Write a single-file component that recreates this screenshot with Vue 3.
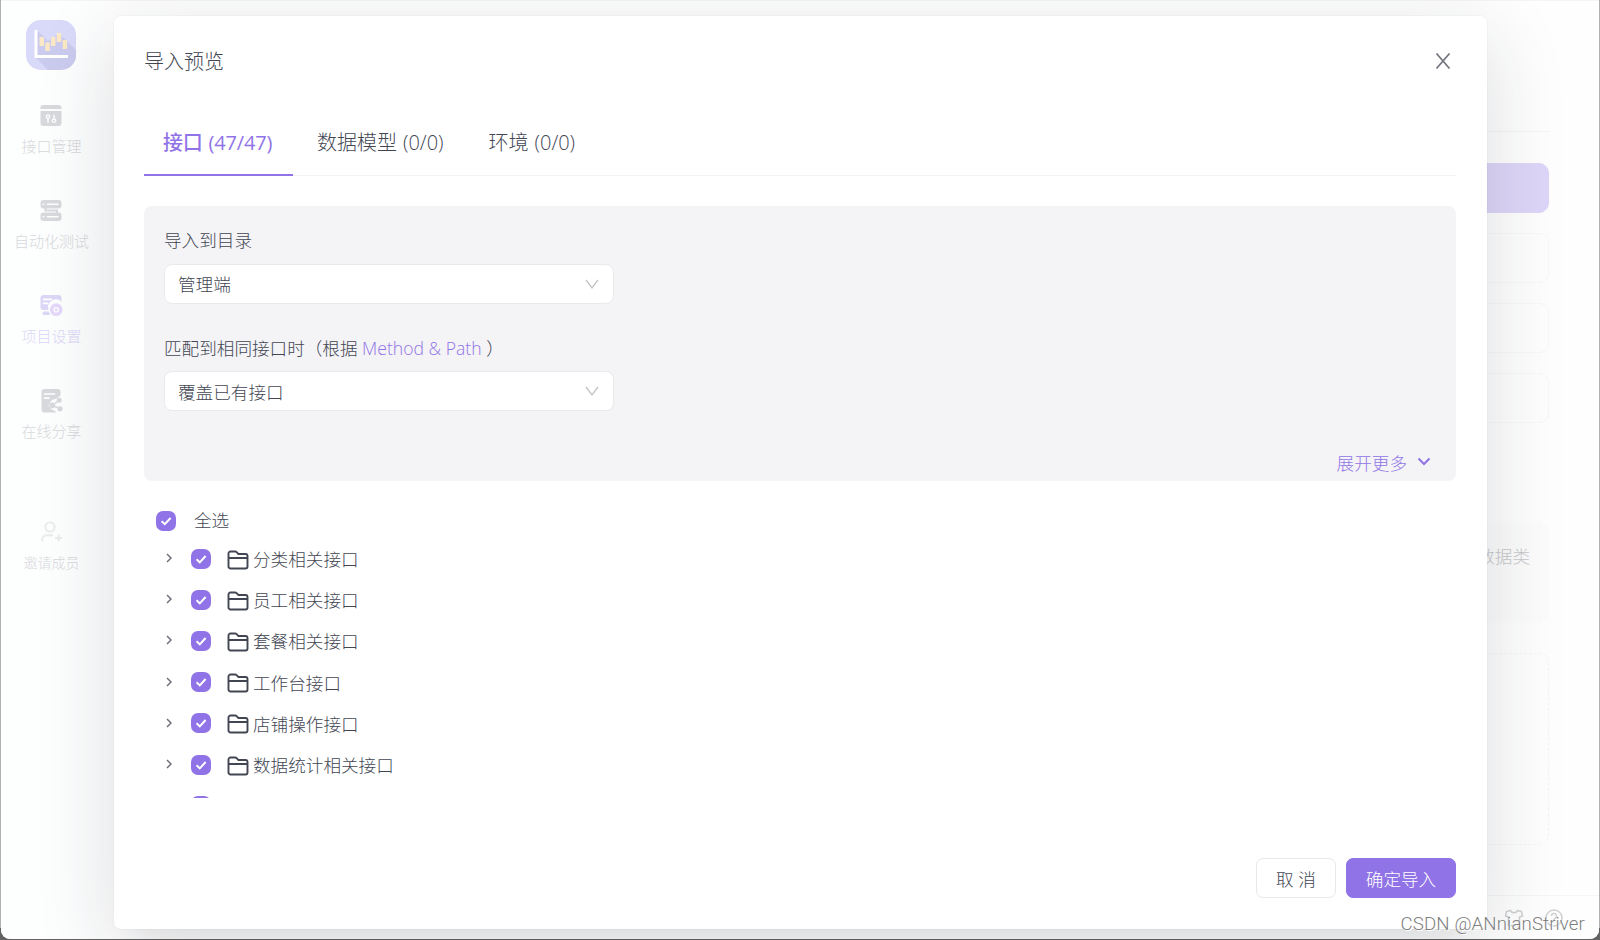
<script setup>
import { ref } from 'vue'

const navItems = [
  { key: 'api',     label: '接口管理' },
  { key: 'test',    label: '自动化测试' },
  { key: 'setting', label: '项目设置' },
  { key: 'share',   label: '在线分享' }
]
const activeNav = ref('setting')

const tabs = [
  { key: 'api',   name: '接口',     count: '(47/47)' },
  { key: 'model', name: '数据模型', count: '(0/0)' },
  { key: 'env',   name: '环境',     count: '(0/0)' }
]
const activeTab = ref('api')

const folders = [
  '分类相关接口',
  '员工相关接口',
  '套餐相关接口',
  '工作台接口',
  '店铺操作接口',
  '数据统计相关接口'
]
</script>

<template>
  <div class="desktop">
    <div class="window">
      <!-- sidebar -->
      <aside class="sidebar">
        <svg class="logo" viewBox="0 0 50 50">
          <defs>
            <clipPath id="logo-clip"><rect width="50" height="50" rx="15" /></clipPath>
          </defs>
          <g clip-path="url(#logo-clip)">
            <rect width="50" height="50" fill="#d9dafa" />
            <path d="M10 10 L14 13 L22 21 L33 14 L39 19 L50 30 V50 H22 L10 38 Z" fill="#cbcbef" />
          </g>
          <path d="M10 10 V36.5 H42" fill="none" stroke="#fff" stroke-width="3" />
          <g fill="#fbe8c6">
            <rect x="13.5" y="17" width="4.5" height="9" />
            <rect x="19.3" y="22.5" width="4.5" height="8.5" />
            <rect x="25" y="17" width="4.5" height="9" />
            <rect x="30.7" y="13" width="4.5" height="9" />
            <rect x="36.6" y="20" width="4.5" height="9" />
          </g>
        </svg>

        <nav class="nav">
          <a v-for="item in navItems" :key="item.key" class="nav-item" :class="{ active: item.key === activeNav }">
            <svg v-if="item.key === 'api'" class="nav-icon" viewBox="0 0 24 24">
              <path d="M1.5 5 V4 a3 3 0 0 1 3 -3 h15 a3 3 0 0 1 3 3 V5 Z" fill="currentColor" />
              <path d="M1.5 7 h21 v12 a3 3 0 0 1 -3 3 h-15 a3 3 0 0 1 -3 -3 Z" fill="currentColor" />
              <g fill="none" stroke="#fdfefe" stroke-width="1.4">
                <circle cx="9" cy="12.6" r="1.7" />
                <path d="M9 14.5 V18.8 M15 10.8 V14.8" />
                <circle cx="15" cy="16.7" r="1.7" />
              </g>
            </svg>
            <svg v-else-if="item.key === 'test'" class="nav-icon" viewBox="0 0 24 24">
              <rect x="1.5" y="1" width="21" height="8.5" rx="3" fill="currentColor" />
              <rect x="1.5" y="13.5" width="21" height="8.5" rx="3" fill="currentColor" />
              <path d="M6.5 9 v2.5 h11.5 v2.5" fill="none" stroke="currentColor" stroke-width="2" />
              <path d="M8.5 5.2 h10.5 M8.5 17.800 h10.500 M4.2 5.2 h.6 M4.2 17.800 h.6" stroke="#fdfefe" stroke-width="1.6" stroke-linecap="round" />
            </svg>
            <svg v-else-if="item.key === 'setting'" class="nav-icon" viewBox="0 0 24 24">
              <path d="M4.5 1 h15 a3 3 0 0 1 3 3 v3.6 a8 8 0 0 0 -13 8.4 h-5 a3 3 0 0 1 -3 -3 V4 a3 3 0 0 1 3 -3 Z" fill="currentColor" />
              <path d="M5 17.5 h4.8 a8 8 0 0 0 1.6 3.5 H5.4 a1.7 1.7 0 0 1 -.4 -3.5" fill="currentColor" />
              <path d="M4.5 5.3 h8 M4.5 9.3 h4" stroke="#fdfefe" stroke-width="1.7" stroke-linecap="round" />
              <circle cx="17.2" cy="15.7" r="4.6" fill="none" stroke="#e5d9fb" stroke-width="3.6" />
              <circle cx="17.2" cy="15.7" r="1.5" fill="#e5d9fb" />
            </svg>
            <svg v-else class="nav-icon" viewBox="0 0 24 24">
              <path d="M5.5 0 h13 a3 3 0 0 1 3 3 v3.5 l-4.5 3.5 a6 6 0 0 0 -6.5 6.5 a6 6 0 0 0 5 5 l2 2 H5.5 a3 3 0 0 1 -3 -3 V3 a3 3 0 0 1 3 -3 Z" fill="currentColor" />
              <path d="M5.5 5 h10 M5.5 9.2 h4.5" stroke="#fdfefe" stroke-width="1.7" stroke-linecap="round" />
              <path d="M20.8 10.8 L13.3 16.5 L21 19.5" fill="none" stroke="#fdfefe" stroke-width="4" />
              <path d="M20.8 10.8 L13.3 16.5 L21 19.5" fill="none" stroke="currentColor" stroke-width="1.5" />
              <g fill="currentColor">
                <circle cx="20.2" cy="11.2" r="2.5" />
                <circle cx="13.3" cy="16.4" r="2.8" />
                <circle cx="21" cy="19.8" r="2.6" />
              </g>
            </svg>
            <span>{{ item.label }}</span>
          </a>
        </nav>

        <a class="invite">
          <svg class="nav-icon" viewBox="0 0 24 24" fill="none" stroke="currentColor" stroke-width="1.9">
            <circle cx="10" cy="7" r="4.6" />
            <path d="M2.2 21.5 v-2 a4.2 4.2 0 0 1 4.2 -4.2 h6.6 M18.7 14.5 v7 M15.2 18 h7" />
          </svg>
          <span>邀请成员</span>
        </a>
      </aside>

      <!-- page under the modal -->
      <main class="page">
        <div class="page-head"></div>
        <div class="option selected"></div>
        <div class="option"></div>
        <div class="option"></div>
        <div class="option"></div>
        <div class="tip">数据类</div>
        <div class="dropzone"></div>
        <footer class="page-foot">
          <svg class="foot-icon" viewBox="0 0 20 20">
            <path d="M6.5 2.5 C7.5 5.5 12.5 5.5 13.5 2.5 L17.5 3.5 L18.5 8 L15.5 9 V17.5 H4.5 V9 L1.5 8 L2.5 3.5 Z" />
          </svg>
          <svg class="foot-icon" viewBox="0 0 20 20">
            <circle cx="10" cy="10" r="8" />
            <path d="M7.5 8 a2.5 2.5 0 1 1 3.6 2.2 c-.8 .4 -1.1 .8 -1.1 1.8 M10 13.6 v1.2" />
          </svg>
        </footer>
      </main>
    </div>

    <section class="modal">
      <header class="modal-head">
        <h2>导入预览</h2>
        <svg class="close" viewBox="0 0 16 16"><path d="M1.5 .5 L14.5 15.5 M14.5 .5 L1.5 15.5" /></svg>
      </header>

      <div class="tabs">
        <div v-for="tab in tabs" :key="tab.key" class="tab" :class="{ active: tab.key === activeTab }">
          {{ tab.name }} {{ tab.count }}
        </div>
      </div>

      <div class="panel">
        <label class="field-label">导入到目录</label>
        <div class="select">
          <span>管理端</span>
          <svg class="arrow" viewBox="0 0 14 10"><path d="M1 .8 L7 8.8 L13 .8" /></svg>
        </div>
        <label class="field-label second">匹配到相同接口时（根据 <em>Method &amp; Path</em> ）</label>
        <div class="select">
          <span>覆盖已有接口</span>
          <svg class="arrow" viewBox="0 0 14 10"><path d="M1 .8 L7 8.8 L13 .8" /></svg>
        </div>
        <a class="more">
          展开更多
          <svg viewBox="0 0 14 10"><path d="M1.5 1.5 L7 7 L12.5 1.5" /></svg>
        </a>
      </div>

      <div class="tree">
        <div class="check-all">
          <span class="checkbox"><svg viewBox="0 0 20 20"><path d="M5.6 10.2 L8.8 13.2 L14.6 7" /></svg></span>
          <span class="name">全选</span>
        </div>
        <div v-for="name in folders" :key="name" class="node">
          <svg class="chevron" viewBox="0 0 6 10"><path d="M1 1 L5 5 L1 9" /></svg>
          <span class="checkbox"><svg viewBox="0 0 20 20"><path d="M5.6 10.2 L8.8 13.4 L14.6 7" /></svg></span>
          <svg class="folder" viewBox="0 0 22 20">
            <path d="M1.5 8 V3.5 a2 2 0 0 1 2 -2 h4.7 a2 2 0 0 1 1.4 .6 l1.8 1.9 h7.1 a2 2 0 0 1 2 2 V16.5 a2 2 0 0 1 -2 2 h-15 a2 2 0 0 1 -2 -2 V8 h19" />
          </svg>
          <span class="name">{{ name }}</span>
        </div>
        <!-- next row, only its top edge is inside the scroll area -->
        <div class="node next"><span class="checkbox"></span></div>
      </div>

      <footer class="modal-foot">
        <button class="btn">取 消</button>
        <button class="btn primary">确定导入</button>
      </footer>
    </section>

    <div class="watermark">CSDN @ANnianStriver</div>
  </div>
</template>

<style>
body { margin: 0; overflow: hidden; }
</style>

<style scoped>
* { box-sizing: border-box; }

.desktop {
  position: relative;
  width: 1600px;
  height: 940px;
  padding: 0 1px 1px;
  background: linear-gradient(#b0b1b3 928px, #626262 928px);
  overflow: hidden;
  color: #424653;
  font-family: "Open Sans", "Noto Sans CJK SC", sans-serif;
  font-size: 17.6px;
  font-weight: 300;
}
.window {
  display: flex;
  height: 939px;
  border-top: 1px solid #f5f5f6;
  border-radius: 0 0 9px 9px;
  background: #fefefe;
  overflow: hidden;
}

/* sidebar */
.sidebar {
  display: flex;
  flex-direction: column;
  align-items: center;
  width: 101px;
  padding-top: 19px;
  background: #fdfefe;
  color: #d8d9dc;
}
.logo { width: 50px; height: 50px; margin-right: 2px; }
.nav  { display: flex; flex-direction: column; margin-top: 34px; }
.nav-item, .invite {
  display: flex;
  flex-direction: column;
  align-items: center;
  height: 95px;
  font-size: 15px;
  line-height: 22px;
  white-space: nowrap;
}
.nav-item.active { color: #dcd7f7; }
.nav-item span   { margin-top: 7px; }
.nav-icon        { width: 24px; height: 24px; }
.invite          { margin-top: 36px; font-size: 14px; }
.invite .nav-icon { color: #ebebed; }
.invite span     { margin-top: 8px; }

/* page */
.page {
  display: flex;
  flex-direction: column;
  flex: 1;
  background: #fefefe;
}
.page > div     { width: 1200px; margin-left: 247px; }
.page-head      { height: 131px; border-bottom: 1px solid #f5f5f7; margin-bottom: 31px; }
.option {
  height: 50px;
  margin-bottom: 20px;
  border: 1px solid #f8f8f9;
  border-radius: 10px;
}
.option.selected { background: #ded6f8; border-color: #ded6f8; }
.tip {
  height: 100px;
  margin-top: 80px;
  padding: 20px 19px;
  border-radius: 8px;
  background: #fcfcfc;
  color: #c8c8cb;
  line-height: 26px;
  text-align: right;
}
.dropzone {
  height: 192px;
  margin-top: 30px;
  border: 1px dashed #f5f5f6;
  border-radius: 10px;
}
.page-foot {
  display: flex;
  justify-content: flex-end;
  gap: 20px;
  margin: 50px 0 0 251px;
  padding: 12px 35px 0 0;
  border-top: 1px solid #f6f6f7;
}
.foot-icon { width: 20px; height: 20px; fill: none; stroke: #d0d0d3; stroke-width: 1.5; }

/* modal */
.modal {
  position: absolute;
  top: 16px;
  left: 114px;
  display: flex;
  flex-direction: column;
  width: 1373px;
  height: 913px;
  padding: 0 31px 0 30px;
  border-radius: 7px;
  background: #fff;
  box-shadow:
    0 0 0 1px rgba(0, 0, 0, 0.02),
    0 20px 80px rgba(30, 32, 45, 0.15),
    0 24px 24px -20px rgba(30, 32, 45, 0.05);
}
.modal-head {
  display: flex;
  align-items: center;
  justify-content: space-between;
  height: 90px;
  padding-right: 5px;
}
.modal-head h2 { margin: -2px 0 0; font-size: 20px; font-weight: 300; }
.close { width: 16px; height: 16px; fill: none; stroke: #73767f; stroke-width: 1.7; }

.tabs { display: flex; gap: 5px; height: 70px; border-bottom: 1px solid #f3f3f5; }
.tab {
  height: 70px;
  padding: 23px 21px 0 19px;
  font-size: 20px;
  line-height: 28px;
  white-space: nowrap;
  word-spacing: 0.8px;
}
.tab.active {
  width: 149px;
  border-bottom: 2px solid #9073e6;
  color: #9073e6;
  font-weight: 500;
  letter-spacing: -0.15px;
}

.panel {
  display: flex;
  flex-direction: column;
  height: 275px;
  margin-top: 30px;
  padding: 21px 25px 0 20px;
  border-radius: 8px;
  background: #f4f4f7;
}
.field-label    { line-height: 26px; }
.field-label.second { margin-top: 31px; }
.field-label em { color: #9073e6; font-style: normal; }
.select {
  display: flex;
  align-items: center;
  justify-content: space-between;
  width: 450px;
  height: 40px;
  margin-top: 11px;
  padding: 0 14px 0 13px;
  border: 1px solid #eaeaed;
  border-radius: 8px;
  background: #fff;
}
.select span { margin-top: -2px; }
.field-label.second + .select { margin-top: 10px; }
.field-label.second + .select span { margin-top: 0; }
.arrow { width: 14px; height: 10px; margin-top: -1px; fill: none; stroke: #c3c3c6; stroke-width: 1.4; }
.more {
  display: flex;
  align-items: center;
  align-self: flex-end;
  gap: 10px;
  margin-top: 39px;
  color: #9073e6;
  line-height: 26px;
}
.more svg { width: 14px; height: 10px; margin-top: -2px; fill: none; stroke: #9073e6; stroke-width: 2; }

/* tree */
.tree { height: 317px; overflow: hidden; padding: 26px 0 0 12px; }
.check-all { display: flex; align-items: center; gap: 18px; height: 28px; }
.check-all .name { margin-top: -3px; }
.node { display: flex; align-items: center; height: 41.2px; padding-left: 9.5px; }
.check-all + .node { margin-top: 3px; }
.node.next { padding-left: 35px; }
.checkbox {
  width: 20px;
  height: 20px;
  border-radius: 7px;
  background: #9073e6;
}
.checkbox svg { display: block; fill: none; stroke: #fff; stroke-width: 2; }
.chevron { width: 6px; height: 10px; margin: -1px 19.5px 0 0; fill: none; stroke: #6d707a; stroke-width: 1.5; }
.folder  { width: 22px; height: 20px; margin: 2px 4.5px 0 15.5px; fill: none; stroke: #424653; stroke-width: 1.9; }

.modal-foot { display: flex; justify-content: flex-end; gap: 10px; margin-top: 60px; }
.btn {
  width: 80px;
  height: 40px;
  padding: 0;
  border: 1px solid #e8e8eb;
  border-radius: 7px;
  background: #fff;
  color: #424653;
  font: inherit;
}
.btn.primary { width: 110px; border-color: #9073e6; background: #9073e6; color: #fff; }

.watermark {
  position: absolute;
  right: 15px;
  bottom: 5px;
  color: #808080;
  font: 300 18.7px/22px Roboto, "Liberation Sans", sans-serif;
  letter-spacing: 0.1px;
  text-shadow: 1px 1px 0 #fff;
}
</style>
